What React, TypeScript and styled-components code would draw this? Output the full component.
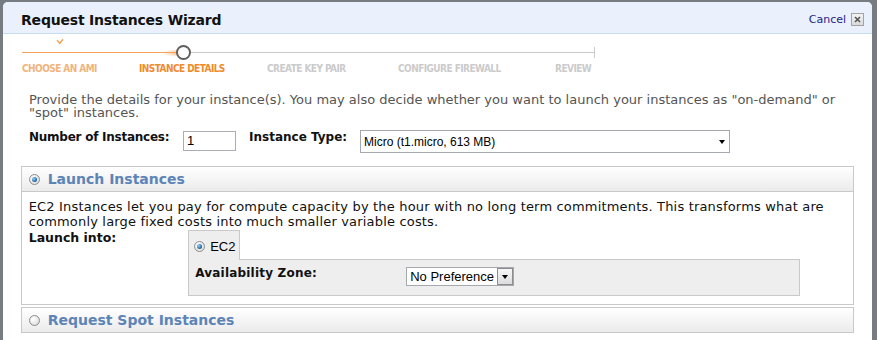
import React from "react";
import styled, { createGlobalStyle } from "styled-components";

const GlobalStyle = createGlobalStyle`
  html, body {
    margin: 0;
    padding: 0;
  }
  body {
    background: #777c82;
    font-family: "DejaVu Sans", Verdana, sans-serif;
    overflow: hidden;
  }
`;

const Dialog = styled.div`
  margin: 2px 5px 0 3px;
  height: 338px;
  background: #fff;
  border-radius: 5px 5px 0 0;
  overflow: hidden;
`;

const Header = styled.div`
  height: 31px;
  background: #eaf1fc;
  border-bottom: 1px solid #c5dcef;
  display: flex;
  align-items: flex-start;
  padding: 0 8px 0 18px;
`;

const Title = styled.h1`
  flex: 1;
  margin: 9px 0 0;
  font-size: 14px;
  line-height: 18px;
  font-weight: bold;
  letter-spacing: -0.2px;
  color: #111;
`;

const HeaderActions = styled.div`
  display: flex;
  align-items: center;
  gap: 5px;
  margin-top: 11px;
`;

const CancelLink = styled.a`
  font-size: 11px;
  line-height: 13px;
  color: #23238c;
  text-decoration: none;
`;

const CloseButton = styled.span`
  width: 13px;
  height: 13px;
  box-sizing: border-box;
  border: 1px solid #a3a3a3;
  background: linear-gradient(#f4f4f4, #d9d9d9);
  display: flex;
  align-items: center;
  justify-content: center;
`;

const Content = styled.div`
  padding: 0 20px 0 17px;
`;

const Stepper = styled.div`
  padding: 4px 0 0 2px;
  width: 573px;
`;

const CheckRow = styled.div`
  height: 7px;
  padding-left: 34px;
  display: flex;
  align-items: flex-end;
`;

const Track = styled.div`
  height: 15px;
  display: flex;
  align-items: center;
`;

const DoneLine = styled.div`
  width: 154px;
  height: 1.5px;
  background: #f3a45a;
  position: relative;
  &::after {
    content: "";
    position: absolute;
    right: -2px;
    top: -3px;
    width: 16px;
    height: 8px;
    background: radial-gradient(ellipse at right, rgba(243, 164, 90, 0.75), rgba(243, 164, 90, 0) 70%);
  }
`;

const CurrentDot = styled.div`
  width: 15px;
  height: 15px;
  box-sizing: border-box;
  border-radius: 50%;
  border: 2px solid #5f5f5f;
  background: #fff;
  position: relative;
  z-index: 1;
`;

const TodoLine = styled.div`
  flex: 1;
  height: 1px;
  background: #c9c9c9;
`;

const EndTick = styled.div`
  width: 1px;
  height: 11px;
  background: #c9c9c9;
`;

const StepLabels = styled.div`
  display: flex;
  margin-top: 2px;
`;

const StepLabel = styled.span<{ $w?: number; $state: "done" | "active" | "todo" }>`
  width: ${(p) => (p.$w ? `${p.$w}px` : "auto")};
  flex-shrink: 0;
  font-family: "DejaVu Sans Condensed", sans-serif;
  font-weight: bold;
  font-size: 10px;
  letter-spacing: -0.55px;
  line-height: 13px;
  white-space: nowrap;
  color: ${(p) => (p.$state === "done" ? "#f2b37c" : p.$state === "active" ? "#ef8b2c" : "#cbcbcb")};
`;

const Intro = styled.p`
  margin: 18px 0 0;
  padding-left: 9px;
  font-size: 13px;
  line-height: 13px;
  color: #555;
`;

const FormRow = styled.div`
  display: flex;
  align-items: flex-start;
  margin-top: 11px;
  padding-left: 9px;
`;

const FieldLabel = styled.label<{ $w: number; $ls?: number }>`
  width: ${(p) => p.$w}px;
  flex-shrink: 0;
  font-size: 12px;
  font-weight: bold;
  letter-spacing: ${(p) => p.$ls ?? 0}px;
  line-height: 15px;
  color: #111;
`;

const NumberInput = styled.div`
  width: 53px;
  height: 20px;
  margin: 1px 13px 0 0;
  box-sizing: border-box;
  border: 1px solid #abadb3;
  font-family: "Liberation Sans", Arial, sans-serif;
  font-size: 13px;
  line-height: 18px;
  padding-left: 3px;
  color: #000;
`;

const Select = styled.div<{ $w: number; $h: number }>`
  width: ${(p) => p.$w}px;
  height: ${(p) => p.$h}px;
  box-sizing: border-box;
  border: 1px solid #a5a9ae;
  background: #fff;
  display: flex;
  align-items: center;
  font-family: "Liberation Sans", Arial, sans-serif;
  color: #000;
`;

const SelectText = styled.span<{ $size: number }>`
  flex: 1;
  padding-left: 3px;
  font-size: ${(p) => p.$size}px;
  white-space: nowrap;
`;

const PlainArrow = styled.span`
  width: 0;
  height: 0;
  margin-right: 4px;
  border-left: 3.5px solid transparent;
  border-right: 3.5px solid transparent;
  border-top: 4px solid #000;
`;

const DropButton = styled.span`
  width: 16px;
  height: 100%;
  box-sizing: border-box;
  border: 1px solid #8d8d8d;
  background: linear-gradient(#f7f7f7, #dcdcdc);
  display: flex;
  align-items: center;
  justify-content: center;
  &::before {
    content: "";
    border-left: 3.5px solid transparent;
    border-right: 3.5px solid transparent;
    border-top: 4px solid #000;
  }
`;

const Panel = styled.div<{ $gap: number }>`
  margin-top: ${(p) => p.$gap}px;
  border: 1px solid #c9c9c9;
  width: 831px;
  margin-left: 0.7px;
`;

const PanelHeader = styled.div<{ $open?: boolean }>`
  height: 24px;
  display: flex;
  align-items: center;
  gap: 8px;
  padding-left: 7px;
  background: linear-gradient(#ffffff, #ebebeb);
  border-bottom: ${(p) => (p.$open ? "1px solid #c9c9c9" : "none")};
`;

const PanelTitle = styled.span`
  font-size: 14px;
  font-weight: bold;
  color: #5c84b6;
  line-height: 18px;
`;

const Radio = styled.span<{ $checked?: boolean }>`
  width: 11px;
  height: 11px;
  box-sizing: border-box;
  flex-shrink: 0;
  border-radius: 50%;
  border: 1px solid #8c8c8c;
  background: radial-gradient(circle at 35% 35%, #ffffff, #d6d6d6);
  display: flex;
  align-items: center;
  justify-content: center;
  &::after {
    content: "";
    display: ${(p) => (p.$checked ? "block" : "none")};
    width: 5px;
    height: 5px;
    border-radius: 50%;
    background: radial-gradient(circle at 35% 35%, #8fd3ff, #1f5f97 70%, #123a60);
  }
`;

const PanelBody = styled.div`
  padding: 7px 0 8px 7px;
`;

const BodyText = styled.p`
  margin: 0;
  font-size: 13px;
  letter-spacing: 0.18px;
  line-height: 15px;
  color: #111;
`;

const LaunchRow = styled.div`
  display: flex;
  align-items: flex-start;
  margin-top: 1px;
`;

const LaunchLabel = styled.span`
  width: 159.5px;
  flex-shrink: 0;
  font-size: 12.5px;
  font-weight: bold;
  line-height: 15px;
  color: #111;
`;

const Tabs = styled.div`
  width: 612px;
  display: flex;
  flex-direction: column;
  align-items: flex-start;
`;

const Tab = styled.div`
  height: 30px;
  width: 52px;
  box-sizing: border-box;
  border: 1px solid #c9c9c9;
  border-bottom: none;
  background: #eeeeee;
  margin-bottom: -1px;
  position: relative;
  z-index: 1;
  display: flex;
  align-items: center;
  gap: 5px;
  padding: 2px 0 0 5px;
  font-family: "Liberation Sans", Arial, sans-serif;
  font-size: 13px;
  color: #000;
`;

const TabPanel = styled.div`
  width: 100%;
  height: 37px;
  box-sizing: border-box;
  border: 1px solid #c9c9c9;
  background: #eeeeee;
  display: flex;
  align-items: flex-start;
  padding: 7px 0 0 6px;
`;

const ZoneLabel = styled.span`
  width: 211px;
  flex-shrink: 0;
  margin-top: -1px;
  font-size: 12px;
  letter-spacing: 0.2px;
  font-weight: bold;
  line-height: 15px;
  color: #111;
`;

const Check = () => (
  <svg width="8" height="7" viewBox="0 0 8 7">
    <path d="M1 2.2 L3.8 5.2 L7 1.2" fill="none" stroke="#f0a860" strokeWidth="1.6" />
  </svg>
);

const Cross = () => (
  <svg width="7" height="7" viewBox="0 0 7 7">
    <path d="M1 1 L6 6 M6 1 L1 6" stroke="#555" strokeWidth="1.6" />
  </svg>
);

export default function App() {
  return (
    <>
      <GlobalStyle />
      <Dialog>
        <Header>
          <Title>Request Instances Wizard</Title>
          <HeaderActions>
            <CancelLink href="#">Cancel</CancelLink>
            <CloseButton>
              <Cross />
            </CloseButton>
          </HeaderActions>
        </Header>
        <Content>
          <Stepper>
            <CheckRow>
              <Check />
            </CheckRow>
            <Track>
              <DoneLine />
              <CurrentDot />
              <TodoLine />
              <EndTick />
            </Track>
            <StepLabels>
              <StepLabel $w={117} $state="done">CHOOSE AN AMI</StepLabel>
              <StepLabel $w={128} $state="active">INSTANCE DETAILS</StepLabel>
              <StepLabel $w={131} $state="todo">CREATE KEY PAIR</StepLabel>
              <StepLabel $w={157} $state="todo">CONFIGURE FIREWALL</StepLabel>
              <StepLabel $state="todo">REVIEW</StepLabel>
            </StepLabels>
          </Stepper>
          <Intro>
            Provide the details for your instance(s). You may also decide whether you want to launch your
            instances as "on-demand" or "spot" instances.
          </Intro>
          <FormRow>
            <FieldLabel $w={154} $ls={-0.25}>Number of Instances:</FieldLabel>
            <NumberInput>1</NumberInput>
            <FieldLabel $w={111}>Instance Type:</FieldLabel>
            <Select $w={370} $h={23}>
              <SelectText $size={12}>Micro (t1.micro, 613 MB)</SelectText>
              <PlainArrow />
            </Select>
          </FormRow>
          <Panel $gap={13}>
            <PanelHeader $open>
              <Radio $checked />
              <PanelTitle>Launch Instances</PanelTitle>
            </PanelHeader>
            <PanelBody>
              <BodyText>
                EC2 Instances let you pay for compute capacity by the hour with no long term commitments. This
                transforms what are commonly large fixed costs into much smaller variable costs.
              </BodyText>
              <LaunchRow>
                <LaunchLabel>Launch into:</LaunchLabel>
                <Tabs>
                  <Tab>
                    <Radio $checked />
                    EC2
                  </Tab>
                  <TabPanel>
                    <ZoneLabel>Availability Zone:</ZoneLabel>
                    <Select $w={108} $h={19}>
                      <SelectText $size={13}>No Preference</SelectText>
                      <DropButton />
                    </Select>
                  </TabPanel>
                </Tabs>
              </LaunchRow>
            </PanelBody>
          </Panel>
          <Panel $gap={2}>
            <PanelHeader>
              <Radio />
              <PanelTitle>Request Spot Instances</PanelTitle>
            </PanelHeader>
          </Panel>
        </Content>
      </Dialog>
    </>
  );
}
